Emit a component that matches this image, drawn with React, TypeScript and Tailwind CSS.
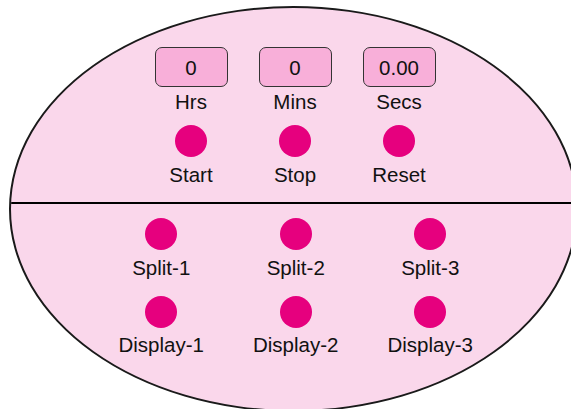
import React from "react";

const font = { fontFamily: '"Liberation Sans", Arial, sans-serif' };

function Dot() {
  return <div className="w-[32px] h-[32px] rounded-full bg-[#e6007e]" />;
}

export default function App() {
  const top = [
    { v: "0", l: "Hrs", b: "Start" },
    { v: "0", l: "Mins", b: "Stop" },
    { v: "0.00", l: "Secs", b: "Reset" },
  ];
  const bottom = ["1", "2", "3"];
  return (
    <div
      className="w-[571px] h-[409px] overflow-hidden bg-white text-[#111] text-[20.5px] leading-[23px]"
      style={font}
    >
      <div className="ml-[9px] mt-[6px] w-[569px] h-[406px] rounded-[50%] border-2 border-[#1a1a1a] bg-[#fad7eb] overflow-hidden flex flex-col">
        <div className="h-[194px] pt-[39px] pl-[128px] flex flex-col">
          <div className="flex">
            {top.map((t) => (
              <div key={t.l} className="w-[104px] flex flex-col items-center">
                <div className="w-[73px] h-[40px] rounded-[7px] border border-[#333] bg-[#f8afd9] flex items-center justify-center">
                  {t.v}
                </div>
                <div className="mt-[3px]">{t.l}</div>
              </div>
            ))}
          </div>
          <div className="flex mt-[12px]">
            {top.map((t) => (
              <div key={t.b} className="w-[104px] flex flex-col items-center">
                <Dot />
                <div className="mt-[6px]">{t.b}</div>
              </div>
            ))}
          </div>
        </div>
        <div className="h-[2px] bg-black" />
        <div className="pt-[14px] pl-[83px] flex flex-col">
          <div className="flex">
            {bottom.map((n) => (
              <div key={n} className="w-[134.5px] flex flex-col items-center">
                <Dot />
                <div className="mt-[6px]">Split-{n}</div>
              </div>
            ))}
          </div>
          <div className="flex mt-[17px]">
            {bottom.map((n) => (
              <div key={n} className="w-[134.5px] flex flex-col items-center">
                <Dot />
                <div className="mt-[5px]">Display-{n}</div>
              </div>
            ))}
          </div>
        </div>
      </div>
    </div>
  );
}
